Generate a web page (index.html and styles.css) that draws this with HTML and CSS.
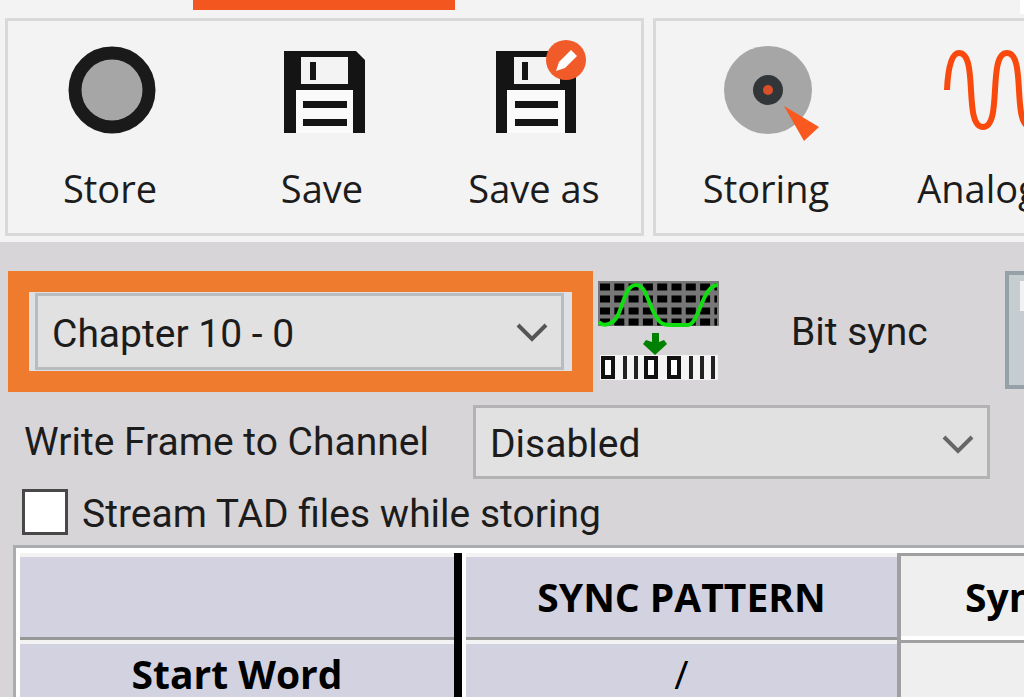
FILE: index.html
```html
<!DOCTYPE html>
<html lang="en">
<head>
  <meta charset="UTF-8">
  <meta name="viewport" content="width=device-width, initial-scale=1.0">
  <title>Chapter 10</title>
  <link rel="stylesheet" href="styles.css">
</head>
<body>
  <header class="ribbon">
    <div class="tabs"><span class="tab-active"></span><span class="tab-end"></span></div>
    <div class="groups">
      <div class="group group-file">
        <button type="button" class="tool">
          <svg width="104" height="104" viewBox="0 0 104 104">
            <circle cx="54" cy="54" r="37" fill="#a6a6a6" stroke="#1a1a1a" stroke-width="13"/>
          </svg>
          <span>Store</span>
        </button>
        <button type="button" class="tool">
          <svg width="104" height="104" viewBox="0 0 104 104">
            <path d="M14 15h72l9 9v73H83V55H26v42H14z" fill="#141414"/>
            <path d="M31 21h47v27H31z" fill="#f3f3f3"/>
            <path d="M40 26h6v18h-6z" fill="#141414"/>
            <path d="M26 54h57v43H26z" fill="#fafafa"/>
            <path d="M33 65h44v7H33zM33 83h44v7H33z" fill="#141414"/>
          </svg>
          <span>Save</span>
        </button>
        <button type="button" class="tool">
          <svg width="104" height="104" viewBox="0 0 104 104">
            <path d="M14 15h76l4 9v73H83V55H25v42H14z" fill="#141414"/>
            <path d="M32 21h46v27H32z" fill="#f3f3f3"/>
            <path d="M40 26h6v18h-6z" fill="#141414"/>
            <path d="M25 54h58v43H25z" fill="#fafafa"/>
            <path d="M33 65h43v7H33zM33 83h43v7H33z" fill="#141414"/>
            <circle cx="84" cy="24" r="20" fill="#f15a29"/>
            <path d="M74 35l3-9 12-12 6 6-12 12z" fill="#fff"/>
          </svg>
          <span>Save as</span>
        </button>
      </div>
      <div class="group group-view">
        <button type="button" class="tool">
          <svg width="104" height="104" viewBox="0 0 104 104">
            <circle cx="54" cy="54" r="44" fill="#a6a6a6"/>
            <circle cx="54" cy="54" r="15" fill="#333638"/>
            <circle cx="54" cy="54" r="5" fill="#d94f2a"/>
            <path d="M70 70l35 21-15 14z" fill="#f9581f"/>
          </svg>
          <span>Storing</span>
        </button>
        <button type="button" class="tool">
          <svg width="104" height="104" viewBox="0 0 104 104">
            <path d="M21 54C22 30 26 17 33 17C53 17 37 91 57 91C77 91 61 17 81 17C101 17 85 91 105 91" fill="none" stroke="#f9490c" stroke-width="6"/>
          </svg>
          <span>Analog</span>
        </button>
      </div>
    </div>
  </header>

  <main class="panel">
    <div class="row row-source">
      <div class="highlight">
        <div class="select select-source">
          <select aria-label="Source"><option>Chapter 10 - 0</option></select>
          <svg class="chevron" width="36" height="24" viewBox="0 0 36 24"><path d="M4 5l14 14L32 5" fill="none" stroke="#555" stroke-width="4"/></svg>
        </div>
      </div>
      <svg class="signal" width="122" height="102" viewBox="0 0 122 102">
        <path d="M0 0h121v45H0z" fill="#777"/>
        <path d="M2 6h117M2 18h117M2 30h117M2 41h117" stroke="#000" stroke-width="7" stroke-dasharray="10 4.3"/>
        <path d="M1 41C5 46 15 44 20 34C26 21 28 4 38 4C49 4 51 27 59 37C64 45 68 44 79 44H90C102 42 104 4 120 4" fill="none" stroke="#12dc12" stroke-width="4"/>
        <path d="M54 52h7v9l5-2 3 4-12 11-12-11 3-4 6 2z" fill="#008000"/>
        <path d="M2 74h118v25H2z" fill="#f4f4f4"/>
        <path d="M5 77h10v19H5zM48 77h10v19H48zM71 77h10v19H71z" fill="#fff" stroke="#111" stroke-width="4"/>
        <path d="M27 75v23M38 75v23M93 75v23M104 75v23M115 75v23" stroke="#222" stroke-width="4"/>
      </svg>
      <span class="sync-label">Bit sync</span>
      <button type="button" class="sync-button" aria-label="Bit sync setup"><span></span></button>
    </div>
    <div class="row row-channel">
      <label for="channel">Write Frame to Channel</label>
      <div class="select select-channel">
        <select id="channel"><option>Disabled</option></select>
        <svg class="chevron" width="36" height="24" viewBox="0 0 36 24"><path d="M4 5l14 14L32 5" fill="none" stroke="#666" stroke-width="4"/></svg>
      </div>
    </div>
    <div class="row row-stream">
      <input type="checkbox" id="stream">
      <label for="stream">Stream TAD files while storing</label>
    </div>

    <div class="grid">
      <table>
        <colgroup><col class="col-name"><col class="col-pattern"><col class="col-sync"></colgroup>
        <tr class="head">
          <td class="name"></td>
          <th class="pattern" scope="col">SYNC PATTERN</th>
          <th class="word" scope="col">Sync</th>
        </tr>
        <tr>
          <th class="name" scope="row">Start Word</th>
          <td class="pattern">/</td>
          <td class="word"></td>
        </tr>
      </table>
    </div>
  </main>
</body>
</html>
```

FILE: styles.css
```css
* {
  box-sizing: border-box;
}
html, body {
  height: 100%;
}
body {
  margin: 0;
  overflow: hidden;
  background: #d8d5d8;
  color: #1c1c1c;
  font-family: Roboto, "Liberation Sans", sans-serif;
  font-size: 39px;
}
button, select {
  margin: 0;
  padding: 0;
  border: 0;
  border-radius: 0;
  background: none;
  color: inherit;
  font: inherit;
}

/* ribbon */
.ribbon {
  height: 242px;
  background: #f3f3f3;
  overflow: hidden;
}
.tabs {
  display: flex;
  justify-content: space-between;
  height: 18px;
  padding-left: 193px;
}
.tab-active {
  width: 262px;
  height: 10px;
  background: #f4561f;
}
.tab-end {
  width: 4px;
  height: 14px;
  background: #fff;
}
.groups {
  display: flex;
  gap: 9px;
  padding-left: 5px;
}
.group {
  display: flex;
  flex: none;
  height: 218px;
  border: 3px solid #d9d9d9;
}
.group-file {
  justify-content: center;
  width: 639px;
  padding-right: 5px;
}
.group-view {
  width: 660px;
  padding-left: 4px;
}
.tool {
  display: flex;
  flex: none;
  flex-direction: column;
  align-items: center;
  width: 212px;
  padding-top: 15px;
  font-family: "Open Sans", "Noto Sans", sans-serif;
  font-size: 38px;
  line-height: 56px;
}
.tool svg {
  margin-bottom: 20px;
  overflow: visible;
}

/* settings */
.row {
  display: flex;
  align-items: center;
}
.row-source {
  height: 121px;
  margin-top: 29px;
  padding-left: 8px;
}
.highlight {
  flex: none;
  width: 585px;
  height: 121px;
  padding: 1px;
  border: 21px solid #ee7b2e;
  background: #dde1e5;
}
.select {
  position: relative;
  border: 3px solid #b3b3b3;
  background: #e1e1e1;
}
.select select {
  display: block;
  width: 100%;
  height: 100%;
  padding: 4px 0 0 14px;
  appearance: none;
  outline: none;
}
.select-source {
  height: 77px;
  margin: 0 7px 0 5px;
  border-color: #b8bcbe;
}
.chevron {
  position: absolute;
  top: 24px;
  right: 11px;
  pointer-events: none;
}
.signal {
  flex: none;
  margin-left: 5px;
}
.sync-label {
  flex: none;
  width: 214px;
  margin-left: 71px;
  white-space: nowrap;
}
.sync-button {
  flex: none;
  align-self: flex-start;
  width: 120px;
  height: 118px;
  border: 4px solid #94a1a6;
  background: #c6cdd0;
}
.sync-button span {
  display: block;
  width: 60px;
  height: 30px;
  margin: 0 0 68px 11px;
  background: #f0f2f3;
}
.row-channel {
  margin-top: 13px;
  padding-left: 24px;
}
.row-channel label {
  flex: none;
  width: 449px;
  white-space: nowrap;
}
.select-channel {
  width: 517px;
  height: 74px;
}
.row-stream {
  gap: 14px;
  margin-top: 10px;
  padding-left: 22px;
}
.row-stream input {
  flex: none;
  width: 46px;
  height: 46px;
  margin: 0;
  border: 3px solid #484848;
  background: #fff;
  appearance: none;
}
.row-stream label {
  padding-top: 4px;
  line-height: 42px;
  white-space: nowrap;
}

/* frame table */
.grid {
  margin: 10px 0 0 13px;
  padding: 5px 0 0 4px;
  border: solid #a9acb1;
  border-width: 3px 0 0 3px;
  background: #fff;
  overflow: hidden;
}
table {
  width: 1315px;
  table-layout: fixed;
  border-collapse: separate;
  border-spacing: 0;
  color: #000;
  font-family: "Open Sans", "Noto Sans", sans-serif;
  font-size: 39px;
  line-height: 56px;
}
.col-name {
  width: 442px;
}
.col-pattern {
  width: 439px;
}
th, td {
  height: 67px;
  padding: 0;
  background: #d3d2e1;
  text-align: center;
  white-space: nowrap;
}
.head th, .head td {
  height: 87px;
}
/* inset shadows keep the grid lines square where they cross */
.name {
  padding-right: 8px;
  box-shadow: inset -8px 0 #000, inset 0 4px #f3f3f3, inset 0 -3px #979797;
}
.pattern {
  box-shadow: inset -4px 0 #a0a0a0, inset 4px 0 #fff, inset 0 4px #f3f3f3, inset 0 -3px #979797;
}
.word {
  padding-left: 64px;
  background: #efefef;
  box-shadow: inset 0 3px #a0a0a0, inset 0 -4px #fff;
  text-align: left;
}
```
